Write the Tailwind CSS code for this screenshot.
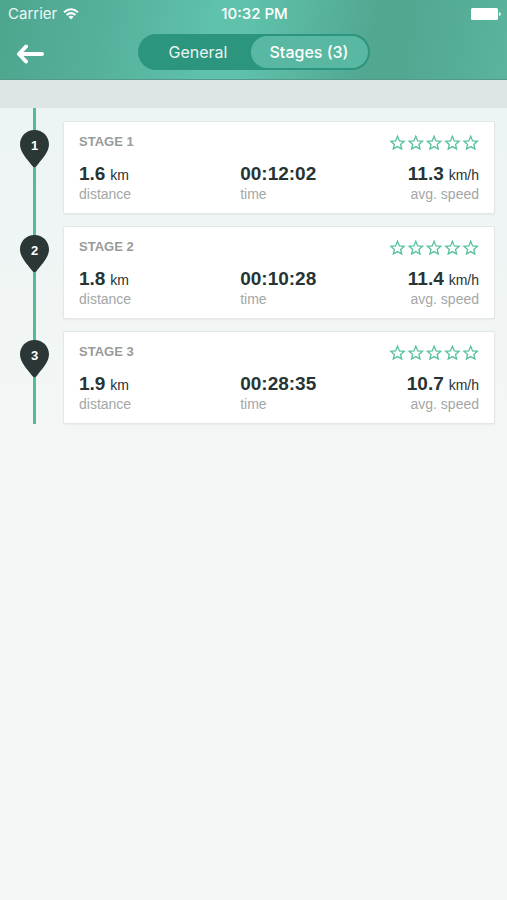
<!DOCTYPE html>
<html lang="en">
<head>
<meta charset="utf-8">
<meta name="viewport" content="width=device-width, initial-scale=1">
<title>Stages</title>
<script src="https://cdn.jsdelivr.net/npm/@tailwindcss/browser@4"></script>
</head>
<body class="min-h-screen bg-[#f3f6f5] font-['Liberation_Sans',Arial,sans-serif] text-[#263434]">
<svg class="hidden" aria-hidden="true">
  <symbol id="stars" viewBox="0 -1 90 16">
    <g fill="none" stroke="#55c1a0" stroke-width="1.3" stroke-linejoin="miter">
      <path id="star" d="M8.500 1.300L10.400 5.900L15.200 6.300L11.600 9.500L12.700 14L8.500 11.600L4.300 14L5.400 9.500L1.800 6.300L6.600 5.900Z"/>
      <use href="#star" x="18.300"/><use href="#star" x="36.600"/><use href="#star" x="54.900"/><use href="#star" x="73.200"/>
    </g>
  </symbol>
  <symbol id="pin" viewBox="0 0 29 38">
    <path d="M14.500 0C6.400 0 0 6.200 0 14.300C0 22.500 7.500 29.500 12.600 36.300Q14.500 38.300 16.400 36.300C21.500 29.500 29 22.500 29 14.300C29 6.200 22.600 0 14.500 0Z" fill="#2b3636"/>
  </symbol>
</svg>

<header class="border-b border-[#55998a] bg-[linear-gradient(100deg,#4ea58e_0%,#55b09a_20%,#5fc2ab_42%,#5fc1aa_49%,#52a791_73%,#52a791_79%,#5ab49e_100%)] font-[Inter,sans-serif] text-white">
  <div class="grid h-7 grid-cols-3 items-center pr-1.5 pl-2 text-[15px]">
    <div class="flex items-center gap-1.5 text-white/90">
      <span>Carrier</span>
      <svg class="h-3 w-4" viewBox="0 0 16 12" fill="none" stroke="white" stroke-width="2" aria-label="Wi-Fi">
        <path d="M1 4.300Q8 -1.900 15 4.300M3.500 7Q8 3.200 12.500 7"/>
        <path d="M5.400 8.800Q8 6.800 10.600 8.800L8 11.500Z" fill="white" stroke="none"/>
      </svg>
    </div>
    <time class="text-center font-medium whitespace-nowrap">10:32 PM</time>
    <svg class="h-3 w-[30px] justify-self-end" viewBox="0 0 30 12" fill="white" aria-label="Battery full">
      <rect width="27" height="12" rx="1.500"/><path d="M28 4Q29.800 4.300 29.800 6Q29.800 7.700 28 8Z"/>
    </svg>
  </div>
  <nav class="grid h-[51px] grid-cols-[1fr_auto_1fr] items-center">
    <button class="ml-4 w-7" aria-label="Back">
      <svg class="h-5 w-7" viewBox="0 0 28 20" fill="none" stroke="white" stroke-width="4" stroke-linecap="round" stroke-linejoin="round"><path d="M10 2.500L3 10L10 17.500M3 10H26"/></svg>
    </button>
    <div class="mb-1 flex h-9 w-[232px] rounded-full bg-[#2c957d] p-0.5 text-base">
      <button class="flex-1 pl-1.5 text-white/90">General</button>
      <button class="w-[117px] rounded-full bg-[#59b8a1] font-medium whitespace-nowrap">Stages (3)</button>
    </div>
    <span></span>
  </nav>
</header>
<div class="h-7 bg-[#dee6e5]"></div>

<main class="relative bg-linear-to-b from-[#edf4f4] to-[#f3f6f5]">
  <div class="absolute inset-y-0 left-[33px] w-[3px] bg-[#4fbd9b]"></div>
  <ol class="relative flex flex-col gap-3 pt-[13px] pr-3">
    <li class="flex">
      <div class="relative mt-[9px] ml-5 mr-3.5 h-[38px] w-[29px] shrink-0">
        <svg class="h-full w-full" aria-hidden="true"><use href="#pin"/></svg>
        <span class="absolute inset-x-0 top-2 text-center text-[13px]/4 font-bold text-white">1</span>
      </div>
      <article class="flex-1 rounded-xs border border-[#e3e8e7] bg-white px-[15px] pt-3 pb-[11px] shadow-xs">
        <div class="flex items-center justify-between">
          <h2 class="text-[13px]/4 font-bold text-[#979c9b]">STAGE 1</h2>
          <svg class="h-4 w-[90px]" role="img" aria-label="No rating"><use href="#stars"/></svg>
        </div>
        <dl class="mt-3 grid grid-cols-[27fr_13fr_27fr] text-sm/4 whitespace-nowrap">
          <div class="flex flex-col-reverse"><dt class="text-[#a3a7a6]">distance</dt><dd><b class="mr-px text-[19px]/6">1.6</b> km</dd></div>
          <div class="flex flex-col-reverse"><dt class="text-[#a3a7a6]">time</dt><dd><b class="text-[19px]/6">00:12:02</b></dd></div>
          <div class="flex flex-col-reverse text-right"><dt class="text-[#a3a7a6]">avg. speed</dt><dd><b class="mr-px text-[19px]/6">11.3</b> km/h</dd></div>
        </dl>
      </article>
    </li>
    <li class="flex">
      <div class="relative mt-[9px] ml-5 mr-3.5 h-[38px] w-[29px] shrink-0">
        <svg class="h-full w-full" aria-hidden="true"><use href="#pin"/></svg>
        <span class="absolute inset-x-0 top-2 text-center text-[13px]/4 font-bold text-white">2</span>
      </div>
      <article class="flex-1 rounded-xs border border-[#e3e8e7] bg-white px-[15px] pt-3 pb-[11px] shadow-xs">
        <div class="flex items-center justify-between">
          <h2 class="text-[13px]/4 font-bold text-[#979c9b]">STAGE 2</h2>
          <svg class="h-4 w-[90px]" role="img" aria-label="No rating"><use href="#stars"/></svg>
        </div>
        <dl class="mt-3 grid grid-cols-[27fr_13fr_27fr] text-sm/4 whitespace-nowrap">
          <div class="flex flex-col-reverse"><dt class="text-[#a3a7a6]">distance</dt><dd><b class="mr-px text-[19px]/6">1.8</b> km</dd></div>
          <div class="flex flex-col-reverse"><dt class="text-[#a3a7a6]">time</dt><dd><b class="text-[19px]/6">00:10:28</b></dd></div>
          <div class="flex flex-col-reverse text-right"><dt class="text-[#a3a7a6]">avg. speed</dt><dd><b class="mr-px text-[19px]/6">11.4</b> km/h</dd></div>
        </dl>
      </article>
    </li>
    <li class="flex">
      <div class="relative mt-[9px] ml-5 mr-3.5 h-[38px] w-[29px] shrink-0">
        <svg class="h-full w-full" aria-hidden="true"><use href="#pin"/></svg>
        <span class="absolute inset-x-0 top-2 text-center text-[13px]/4 font-bold text-white">3</span>
      </div>
      <article class="flex-1 rounded-xs border border-[#e3e8e7] bg-white px-[15px] pt-3 pb-[11px] shadow-xs">
        <div class="flex items-center justify-between">
          <h2 class="text-[13px]/4 font-bold text-[#979c9b]">STAGE 3</h2>
          <svg class="h-4 w-[90px]" role="img" aria-label="No rating"><use href="#stars"/></svg>
        </div>
        <dl class="mt-3 grid grid-cols-[27fr_13fr_27fr] text-sm/4 whitespace-nowrap">
          <div class="flex flex-col-reverse"><dt class="text-[#a3a7a6]">distance</dt><dd><b class="mr-px text-[19px]/6">1.9</b> km</dd></div>
          <div class="flex flex-col-reverse"><dt class="text-[#a3a7a6]">time</dt><dd><b class="text-[19px]/6">00:28:35</b></dd></div>
          <div class="flex flex-col-reverse text-right"><dt class="text-[#a3a7a6]">avg. speed</dt><dd><b class="mr-px text-[19px]/6">10.7</b> km/h</dd></div>
        </dl>
      </article>
    </li>
  </ol>
</main>
</body>
</html>
